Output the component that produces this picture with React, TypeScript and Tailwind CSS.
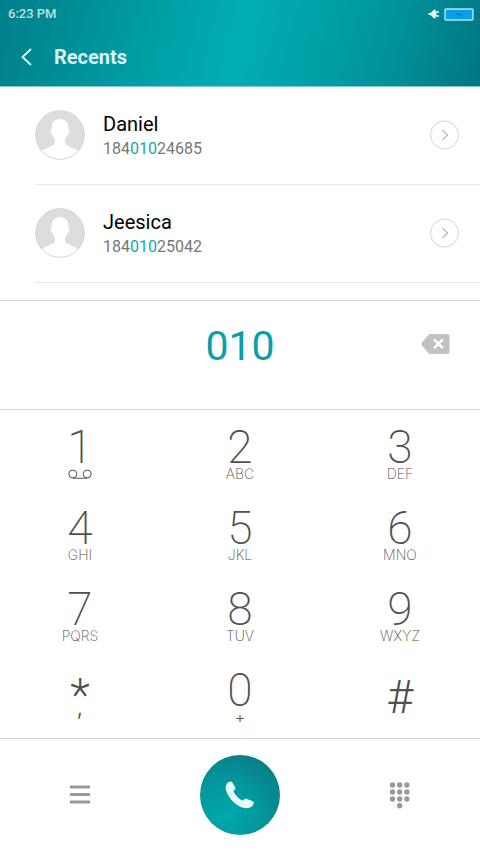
import { useState } from "react";
import clsx from "clsx";

type Contact = {
  name: string;
  phone: string;
};

type DialKey = {
  digit: string;
  letters?: string;
  label?: string;
};

const CONTACTS: Contact[] = [
  { name: "Daniel", phone: "18401024685" },
  { name: "Jeesica", phone: "18401025042" },
];

const KEYS: DialKey[] = [
  { digit: "1", label: "1, voicemail" },
  { digit: "2", letters: "ABC" },
  { digit: "3", letters: "DEF" },
  { digit: "4", letters: "GHI" },
  { digit: "5", letters: "JKL" },
  { digit: "6", letters: "MNO" },
  { digit: "7", letters: "PQRS" },
  { digit: "8", letters: "TUV" },
  { digit: "9", letters: "WXYZ" },
  { digit: "*", letters: ",", label: "Star, pause" },
  { digit: "0", letters: "+" },
  { digit: "#", label: "Pound" },
];

function StatusBar() {
  return (
    <div className="flex h-7 items-center justify-between pl-2 pr-1.5">
      <span className="text-[13px] font-medium text-white/75">6:23 PM</span>
      <div className="flex items-center gap-1">
        <svg width="12" height="10" viewBox="0 0 12 10" className="text-white/90" aria-hidden="true">
          <path d="M.5 4h2L5 1.600 6 .6h1.500v1.600H11v1.600H8.500v2.400H11v1.600H7.500v1.600H6L5 8.400 2.500 6h-2z" fill="currentColor" />
        </svg>
        <svg width="30" height="13" viewBox="0 0 30 13" aria-hidden="true">
          <rect x="1" y="1" width="28" height="11" rx="1" fill="#08a0ec" stroke="#b5e3ea" strokeWidth="1.400" />
          <path d="M12 6.600q1.600-1.400 3 0t3-.4" fill="none" stroke="#0b72b5" strokeWidth="1.400" />
        </svg>
      </div>
    </div>
  );
}

function Avatar() {
  return (
    <svg width="50" height="50" viewBox="0 0 50 50" className="shrink-0" aria-hidden="true">
      <defs>
        <clipPath id="avatar-clip">
          <circle cx="25" cy="25" r="24.500" />
        </clipPath>
      </defs>
      <g clipPath="url(#avatar-clip)">
        <rect width="50" height="50" fill="#dcdddd" />
        <path
          d="M25 9c-5.400 0-8.300 3.600-8.300 8.200v2.200c-1.300.2-1.400 1.600-1 3 .3 1.300.9 2.300 1.900 2.300.5 2 1.300 3.500 2.300 4.700v3.400c0 1.600-1 2.400-2.900 3.200C11.500 38.400 7 40 5 43v8h40v-8c-2-3-6.500-4.600-12-7-1.900-.8-2.900-1.600-2.900-3.200v-3.400c1-1.200 1.800-2.700 2.300-4.700 1 0 1.600-1 1.900-2.300.4-1.400.3-2.800-1-3v-2.200C33.300 12.600 30.400 9 25 9z"
          fill="#fff"
        />
      </g>
      <circle cx="25" cy="25" r="24.300" fill="none" stroke="#d6d7d7" />
    </svg>
  );
}

// Paints the part of the number that matches what has been dialled.
function MatchedNumber({ phone, query }: { phone: string; query: string }) {
  const start = query ? phone.indexOf(query) : -1;
  if (start < 0) return <>{phone}</>;
  return (
    <>
      {phone.slice(0, start)}
      <span className="text-[#0fabb0]">{query}</span>
      {phone.slice(start + query.length)}
    </>
  );
}

function ContactRow({ contact, query }: { contact: Contact; query: string }) {
  return (
    <li className="ml-[35px] flex h-[98px] items-center border-b border-[#e9e9e9] pb-0.5 pr-5">
      <Avatar />
      <div className="ml-[18px] flex-1 pt-1">
        <p className="text-xl leading-6 text-black">{contact.name}</p>
        <p className="text-base leading-[25px] text-[#777]">
          <MatchedNumber phone={contact.phone} query={query} />
        </p>
      </div>
      <button type="button" aria-label={`Details for ${contact.name}`}>
        <svg width="30" height="30" viewBox="0 0 30 30" fill="none">
          <circle cx="14.500" cy="15" r="14" stroke="#d4d4d4" />
          <path d="M12.500 10l5 5-5 5" stroke="#b8b8b8" strokeWidth="1.300" />
        </svg>
      </button>
    </li>
  );
}

function DialButton({ item, onPress }: { item: DialKey; onPress: (digit: string) => void }) {
  const isStar = item.digit === "*";
  const isPound = item.digit === "#";
  return (
    <button
      type="button"
      aria-label={item.label}
      onClick={() => onPress(item.digit)}
      className="flex h-[54px] flex-col items-center text-[#505050]"
    >
      <span
        className={clsx(
          isStar && "h-[30px] text-[46px] font-light leading-[50px]",
          isPound && "h-10 text-[46px] font-light leading-[54px]",
          !isStar && !isPound && "h-10 text-[46px] font-extralight leading-10"
        )}
      >
        {item.digit}
      </span>
      {item.letters && (
        <span
          className={clsx(
            "font-['Inter',sans-serif] leading-[14px]",
            isStar && "text-2xl font-light",
            item.letters === "+" && "text-base font-light",
            !isStar && item.letters !== "+" && "text-sm font-extralight"
          )}
        >
          {item.letters}
        </span>
      )}
      {item.digit === "1" && (
        <svg width="24" height="14" viewBox="0 0 24 14" fill="none" stroke="currentColor" aria-hidden="true">
          <circle cx="4.800" cy="7" r="4" />
          <circle cx="19.200" cy="7" r="4" />
          <path d="M4.800 11.200h14.400" />
        </svg>
      )}
    </button>
  );
}

export default function App() {
  const [dialled, setDialled] = useState("010");

  return (
    <div className="flex min-h-screen flex-col bg-white font-['Roboto',sans-serif]">
      <header className="h-[87px] border-b border-[#80c8cd] bg-[linear-gradient(105deg,#007f8b_0%,#00929b_20%,#00a4ab_38%,#00aeb2_50%,#00a2a9_64%,#00909a_82%,#007582_100%)]">
        <StatusBar />
        <div className="flex h-[58px] items-center gap-4 pl-4">
          <button type="button" aria-label="Back">
            <svg width="22" height="22" viewBox="0 0 22 22" fill="none">
              <path d="M15 3l-8.500 8L15 19" stroke="#e4f8f8" strokeWidth="1.800" />
            </svg>
          </button>
          <h1 className="text-xl font-bold leading-6 text-[#daf4f4]">Recents</h1>
        </div>
      </header>

      <ul className="border-b border-[#d2d2d2] pb-[17px]">
        {CONTACTS.map((contact) => (
          <ContactRow key={contact.phone} contact={contact} query={dialled} />
        ))}
      </ul>

      <section className="grid h-[109px] grid-cols-3 items-start border-b border-[#d2d2d2] pt-5">
        <output className="col-start-2 text-center text-[41px] leading-[50px] text-[#0a9fa8]">{dialled}</output>
        <button
          type="button"
          aria-label="Delete digit"
          onClick={() => setDialled(dialled.slice(0, -1))}
          className="mr-[29px] flex h-[46px] items-center justify-self-end"
        >
          <svg width="31" height="22" viewBox="0 0 31 22">
            <path d="M10.200 1H27q2.500 0 2.500 2.500v15q0 2.500-2.500 2.500H10.200q-1 0-1.800-.9L1.800 12.200q-1-1.200 0-2.400L8.400 1.900q.8-.9 1.800-.9z" fill="#c1c1c1" />
            <path d="M14 6.400l8.800 8.800M22.800 6.400L14 15.200" stroke="#fff" strokeWidth="2.400" />
          </svg>
        </button>
      </section>

      <section className="grid grid-cols-3 gap-y-[27px] border-b border-[#d2d2d2] pb-[14px] pt-[17px]">
        {KEYS.map((item) => (
          <DialButton key={item.digit} item={item} onPress={(digit) => setDialled(dialled + digit)} />
        ))}
      </section>

      <footer className="grid grid-cols-3 items-center justify-items-center pb-4 pt-4">
        <button type="button" aria-label="Menu">
          <svg width="22" height="20" viewBox="0 0 22 20" stroke="#999" strokeWidth="2.800" strokeLinecap="round">
            <path d="M2 2h18M2 9.500h18M2 17h18" />
          </svg>
        </button>
        <button
          type="button"
          aria-label="Call"
          className="flex size-20 items-center justify-center rounded-full bg-[radial-gradient(circle_at_32%_76%,#00a8ac_0%,#04979e_42%,#07808b_78%,#076f7d_100%)]"
        >
          <svg width="30" height="30" viewBox="0 0 30 30">
            <path
              d="M2 3.400C3.400 1.700 6.200.6 7.200 2.300l3 5.200c.6 1.200-.2 2.500-1.800 3.200 1.100 3.800 5.600 8.500 9.500 10 .8-1.700 2.100-2.300 3.400-1.900l6.600 2.500c1.800.9.900 3.500-.8 4.900-3 2.500-8.200 2.800-13.200-.1C8 22.500 3.100 17 1.200 10.800.4 7.900.5 5.200 2 3.400z"
              fill="#e6fafa"
            />
          </svg>
        </button>
        <button type="button" aria-label="Hide keypad">
          <svg width="22" height="28" viewBox="0 0 22 28" fill="#999">
            {[4, 11, 18].map((y) =>
              [3.5, 10.7, 17.9].map((x) => <circle key={`${x}-${y}`} cx={x} cy={y} r="2.700" />)
            )}
            <circle cx="10.700" cy="24.700" r="2.700" />
          </svg>
        </button>
      </footer>
    </div>
  );
}
